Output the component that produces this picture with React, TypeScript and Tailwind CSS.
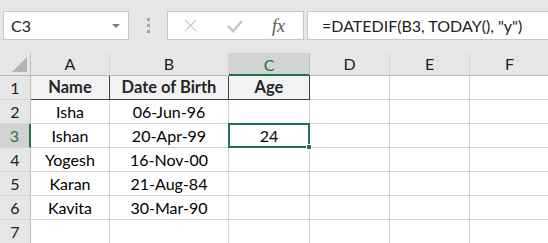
import React from 'react';

const cols = ['A', 'B', 'C', 'D', 'E', 'F'];

const rows: string[][] = [
    ['Name', 'Date of Birth', 'Age'],
    ['Isha', '06-Jun-96', ''],
    ['Ishan', '20-Apr-99', '24'],
    ['Yogesh', '16-Nov-00', ''],
    ['Karan', '21-Aug-84', ''],
    ['Kavita', '30-Mar-90', ''],
    ['', '', ''],
];

function FormulaBar() {
    return (
        <div className="flex h-[53px] items-start bg-[#e6e6e6] pt-[11px] pl-[3px]">
            {/* Name box */}
            <div className="relative flex h-[29px] w-[126px] items-center border border-[#c6c6c6] bg-white pl-[7px] text-[16px] text-[#222]">
                C3
                <span className="absolute right-[8px] top-[12px] h-0 w-0 border-x-[4px] border-t-[4px] border-x-transparent border-t-[#7a7a7a]" />
            </div>

            {/* Drag handle */}
            <div className="flex w-[38px] flex-col items-center gap-[3px] pt-[7px]">
                <span className="h-[3px] w-[3px] bg-[#a6a6a6]" />
                <span className="h-[3px] w-[3px] bg-[#a6a6a6]" />
                <span className="h-[3px] w-[3px] bg-[#a6a6a6]" />
            </div>

            {/* Cancel / Enter / Insert function */}
            <div className="flex h-[29px] w-[137px] items-center border border-[#c6c6c6] bg-white">
                <svg className="ml-[15px]" width="15" height="15" viewBox="0 0 16 16">
                    <path d="M2 2 L14 14 M14 2 L2 14" stroke="#c8c8c8" strokeWidth="1.4" fill="none" />
                </svg>
                <svg className="ml-[28px]" width="18" height="16" viewBox="0 0 18 16">
                    <path d="M2 8 L7 13 L16 3" stroke="#c8c8c8" strokeWidth="2.6" fill="none" />
                </svg>
                <span className="ml-[28px] font-['Liberation_Serif',serif] text-[18px] italic leading-none text-[#555]">
                    fx
                </span>
            </div>

            {/* Formula input */}
            <div className="ml-[3px] flex h-[29px] flex-1 items-center border border-r-0 border-[#c6c6c6] bg-white pl-[14px] text-[16px] text-[#222]">
                =DATEDIF(B3, TODAY(), "y")
            </div>
        </div>
    );
}

export default function App() {
    return (
        <div className="h-[243px] w-[548px] overflow-hidden bg-white font-['Lato','Liberation_Sans',sans-serif]">
            <FormulaBar />

            <div className="grid grid-cols-[31px_79px_119px_81px_80px_80px_80px] grid-rows-[23px_repeat(7,24px)]">
                {/* Corner */}
                <div className="relative border-r border-b border-[#bdbdbd] bg-[#e6e6e6]">
                    <span className="absolute right-[3px] bottom-[3px] h-0 w-0 [border-bottom:15px_solid_#b4b4b4] [border-left:15px_solid_transparent]" />
                </div>

                {/* Column headers */}
                {cols.map((c) => (
                    <div
                        key={c}
                        className={
                            c === 'C'
                                ? 'flex items-center justify-center border-r border-b-2 border-r-[#bdbdbd] border-b-[#217346] bg-[#d2d2d2] pt-[2px] text-[16px] text-[#217346]'
                                : 'flex items-center justify-center border-r border-b border-[#d4d4d4] border-b-[#bdbdbd] bg-[#e6e6e6] text-[16px] text-[#222]'
                        }
                    >
                        {c}
                    </div>
                ))}

                {rows.map((r, i) => {
                    const n = i + 1;
                    const selectedRow = n === 3;
                    return (
                        <React.Fragment key={n}>
                            <div
                                className={
                                    selectedRow
                                        ? 'flex items-center justify-center border-r-2 border-b border-r-[#217346] border-b-[#d4d4d4] bg-[#d2d2d2] text-[16px] text-[#217346]'
                                        : 'flex items-center justify-center border-r border-b border-r-[#bdbdbd] border-b-[#d4d4d4] bg-[#e6e6e6] text-[16px] text-[#222]'
                                }
                            >
                                {n}
                            </div>
                            {[0, 1, 2, 3, 4, 5].map((ci) => {
                                const val = r[ci] ?? '';
                                if (n === 1 && ci < 3) {
                                    return (
                                        <div
                                            key={ci}
                                            className="flex items-center justify-center border-r border-b border-[#3f3f3f] bg-[#f2f2f2] text-[16.5px] font-bold text-[#262626]"
                                        >
                                            {val}
                                        </div>
                                    );
                                }
                                if (n === 3 && ci === 2) {
                                    return (
                                        <div
                                            key={ci}
                                            className="relative -mt-px -ml-px flex h-[25px] w-[82px] items-center justify-center border-2 border-[#217346] text-[16px] text-black"
                                        >
                                            {val}
                                            <span className="absolute -right-[4px] -bottom-[4px] h-[6px] w-[6px] border border-white bg-[#217346]" />
                                        </div>
                                    );
                                }
                                return (
                                    <div
                                        key={ci}
                                        className="flex items-center justify-center border-r border-b border-[#d4d4d4] text-[16px] text-black"
                                    >
                                        {val}
                                    </div>
                                );
                            })}
                        </React.Fragment>
                    );
                })}
            </div>
        </div>
    );
}
